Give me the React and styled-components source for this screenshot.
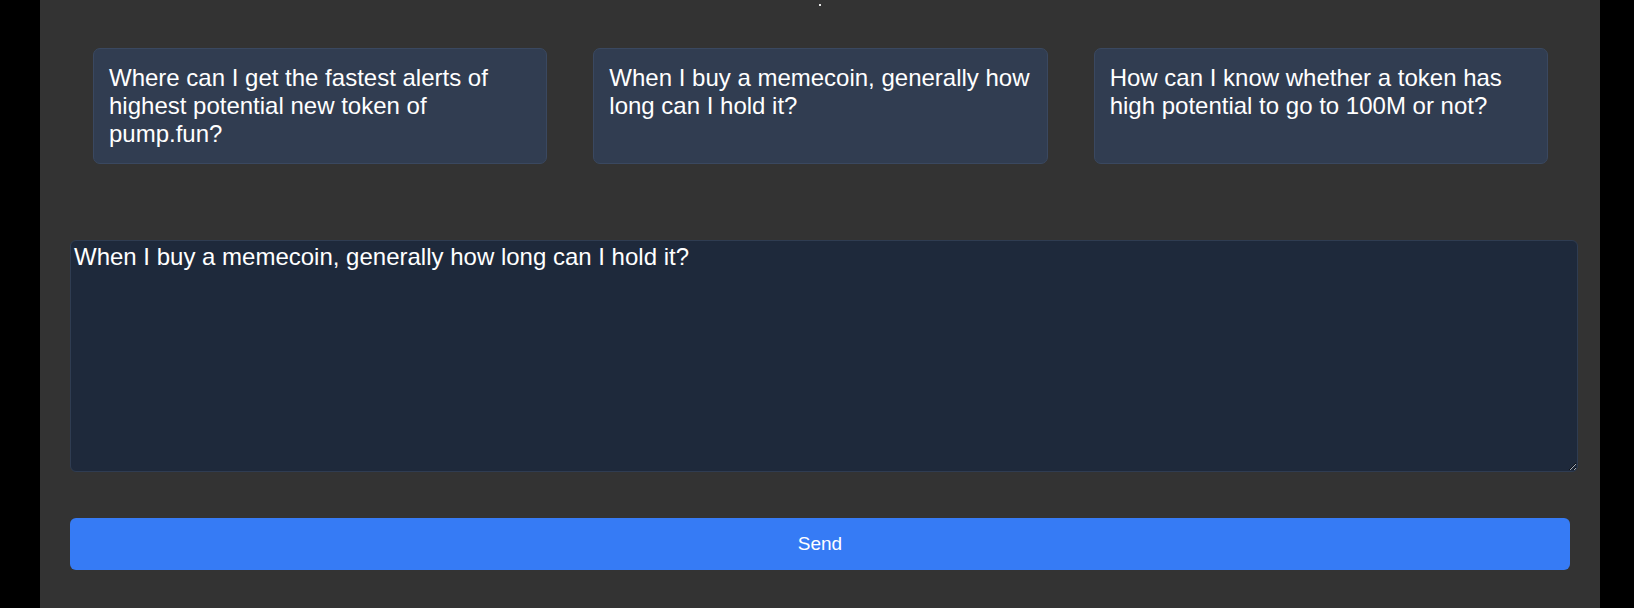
import React, { useState } from 'react';
import styled, { createGlobalStyle } from 'styled-components';

const suggestions = [
    'Where can I get the fastest alerts of highest potential new token of pump.fun?',
    'When I buy a memecoin, generally how long can I hold it?',
    'How can I know whether a token has high potential to go to 100M or not?',
];

export default function App() {
    const [message, setMessage] = useState(suggestions[1]);

    return (
        <>
            <GlobalStyle />
            <Panel>
                <TopDot />
                <SuggestionGrid>
                    {suggestions.map(text => (
                        <SuggestionCard key={text} onClick={() => setMessage(text)}>
                            {text}
                        </SuggestionCard>
                    ))}
                </SuggestionGrid>

                <MessageInput
                    value={message}
                    onChange={e => setMessage(e.target.value)}
                />

                <SendButton type="button">Send</SendButton>
            </Panel>
        </>
    );
}

const GlobalStyle = createGlobalStyle`
    body {
        margin: 0;
        background: #000;
        font-family: "Liberation Sans", Arial, sans-serif;
    }
`;

const Panel = styled.main`
    box-sizing: border-box;
    width: 1560px;
    min-height: 100vh;
    margin-left: 40px;
    padding: 0 30px 38px;
    background: #333333;
    display: flex;
    flex-direction: column;
`;

const TopDot = styled.span`
    align-self: center;
    width: 2px;
    height: 2px;
    margin-top: 4px;
    background: #e6e6e6;
`;

const SuggestionGrid = styled.div`
    display: grid;
    grid-template-columns: repeat(3, 1fr);
    gap: 46px;
    padding: 0 22px 0 23px;
    margin-top: 42px;
`;

const SuggestionCard = styled.div`
    padding: 15px;
    background: #313d51;
    border: 1px solid #3a4860;
    border-radius: 7px;
    color: #fff;
    font-size: 24px;
    line-height: normal;
    cursor: pointer;
`;

const MessageInput = styled.textarea`
    display: block;
    width: 100%;
    height: 226px;
    margin-top: 76px;
    padding: 2px 3px;
    background: #1e293b;
    border: 1px solid #2f3c51;
    border-radius: 6px;
    color: #fff;
    color-scheme: dark;
    font-family: "Liberation Sans", Arial, sans-serif;
    font-size: 24px;
    outline: none;
`;

const SendButton = styled.button`
    height: 52px;
    margin-top: 46px;
    background: #367bf5;
    border: none;
    border-radius: 6px;
    color: #fff;
    font-family: "Liberation Sans", Arial, sans-serif;
    font-size: 19px;
    cursor: pointer;
`;
